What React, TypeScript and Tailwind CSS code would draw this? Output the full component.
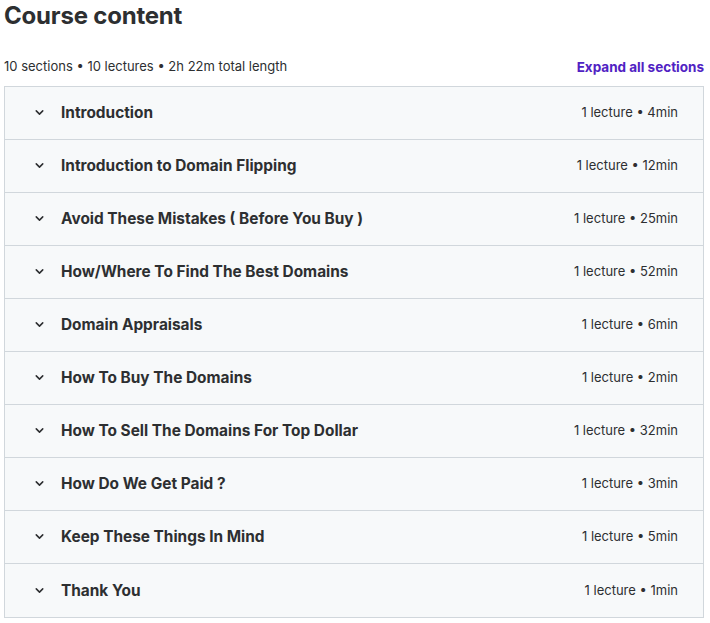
import React from "react";

const sections: [string, string][] = [
  ["Introduction", "1 lecture • 4min"],
  ["Introduction to Domain Flipping", "1 lecture • 12min"],
  ["Avoid These Mistakes ( Before You Buy )", "1 lecture • 25min"],
  ["How/Where To Find The Best Domains", "1 lecture • 52min"],
  ["Domain Appraisals", "1 lecture • 6min"],
  ["How To Buy The Domains", "1 lecture • 2min"],
  ["How To Sell The Domains For Top Dollar", "1 lecture • 32min"],
  ["How Do We Get Paid ?", "1 lecture • 3min"],
  ["Keep These Things In Mind", "1 lecture • 5min"],
  ["Thank You", "1 lecture • 1min"],
];

function Chevron() {
  return (
    <svg width="13" height="13" viewBox="0 0 24 24" fill="none" stroke="#2d2f31" strokeWidth="2.8" strokeLinecap="round" strokeLinejoin="round">
      <path d="M6 9l6 6 6-6" />
    </svg>
  );
}

export default function App() {
  return (
    <div className="w-[710px] h-[623px] bg-white text-[#2d2f31] px-[4px]" style={{ fontFamily: "Inter, 'Noto Sans', sans-serif" }}>
      <h2 className="text-[24px] font-bold leading-[32px] tracking-[-0.2px]">Course content</h2>
      <div className="flex items-center justify-between h-[28px] mt-[21px] mb-[5px]">
        <span className="text-[13px]">10 sections • 10 lectures • 2h 22m total length</span>
        <span className="text-[13.5px] font-bold text-[#5022c3] mr-[2px]">Expand all sections</span>
      </div>
      <div className="border border-[#d1d7dc] w-[700px]">
        {sections.map(([title, meta], i) => (
          <div
            key={i}
            className={`flex items-center justify-between h-[53px] bg-[#f7f9fa] pl-[28px] pr-[25px] ${i < sections.length - 1 ? "border-b border-[#d1d7dc]" : ""}`}
          >
            <div className="flex items-center">
              <Chevron />
              <span className="ml-[15px] text-[15.4px] font-bold">{title}</span>
            </div>
            <span className="text-[13px]">{meta}</span>
          </div>
        ))}
      </div>
    </div>
  );
}
